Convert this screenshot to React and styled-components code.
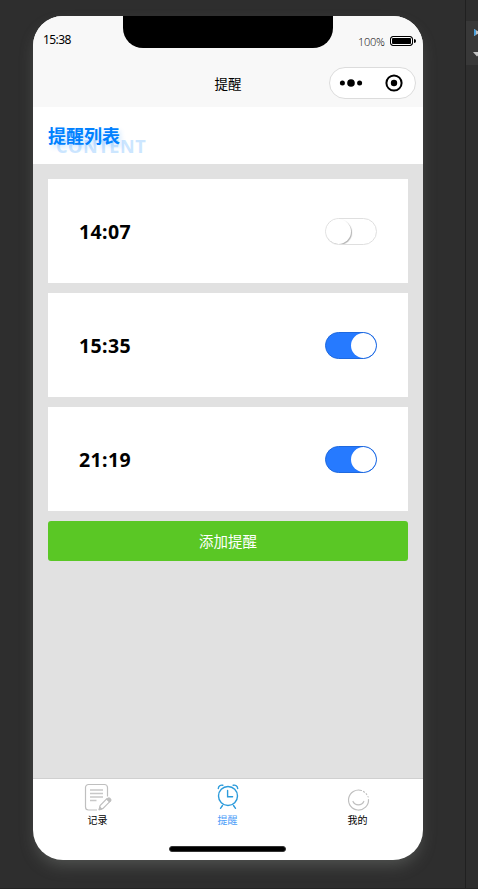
import React, { useState } from "react";
import styled, { createGlobalStyle } from "styled-components";

const App = () => {
  const [reminders, setReminders] = useState([
    { time: "14:07", on: false },
    { time: "15:35", on: true },
    { time: "21:19", on: true },
  ]);

  const toggleReminder = (position) => {
    setReminders(
      reminders.map((item, index) =>
        index === position ? { ...item, on: !item.on } : item
      )
    );
  };

  return (
    <Desk>
      <GlobalStyle />
      <Phone>
        <StatusBar>
          <Clock>15:38</Clock>
          <Notch />
          <BatteryGroup>
            <span>100%</span>
            <Battery />
          </BatteryGroup>
        </StatusBar>
        <NavBar>
          <NavTitle>提醒</NavTitle>
          <Capsule>
            <MenuIcon />
            <CloseIcon />
          </Capsule>
        </NavBar>
        <TitleBar>
          <Title>提醒列表</Title>
          <TitleShade>CONTENT</TitleShade>
        </TitleBar>
        <Content>
          {reminders.map((item, index) => (
            <Card key={item.time}>
              <Time>{item.time}</Time>
              <Switch
                $on={item.on}
                role="switch"
                aria-checked={item.on}
                onClick={() => toggleReminder(index)}
              >
                <Knob $on={item.on} />
              </Switch>
            </Card>
          ))}
          <AddButton>添加提醒</AddButton>
        </Content>
        <TabBar>
          <Tab>
            <NoteIcon />
            <span>记录</span>
          </Tab>
          <Tab $active>
            <AlarmIcon />
            <span>提醒</span>
          </Tab>
          <Tab>
            <SmileIcon />
            <span>我的</span>
          </Tab>
        </TabBar>
        <HomeArea>
          <HomeIndicator />
        </HomeArea>
      </Phone>
      <SidePanel>
        <TreeRows>
          <svg width="12" height="44" viewBox="0 0 12 44">
            <path d="M8 8l6 3.5-6 3.5z" fill="#c4c4c4" />
            <path d="M8 8l2 1.200v4.600l-2 1.200z" fill="#4aa0dc" />
            <path d="M7 31h8l-4 4.500z" fill="#c4c4c4" />
          </svg>
        </TreeRows>
      </SidePanel>
    </Desk>
  );
};

const MenuIcon = () => (
  <svg width="24" height="10" viewBox="0 0 24 10">
    <circle cx="3.4" cy="5" r="2.5" />
    <circle cx="12" cy="5" r="3.8" />
    <circle cx="20.6" cy="5" r="2.5" />
  </svg>
);

const CloseIcon = () => (
  <svg width="18" height="18" viewBox="0 0 18 18">
    <circle cx="9" cy="9" r="7.6" fill="none" stroke="#000" strokeWidth="2" />
    <circle cx="9" cy="9" r="3.2" />
  </svg>
);

const NoteIcon = () => (
  <svg width="30" height="30" viewBox="0 0 30 30" fill="none" stroke="#bfbfbf">
    <path
      d="M24.500 13.500V4.500a3 3 0 0 0-3-3h-16a3 3 0 0 0-3 3v19.500a3 3 0 0 0 3 3h8.500"
      strokeWidth="1.200"
    />
    <path
      d="M7 7h13M7 10.500h13M7 14h13M7 17.500h6.500"
      stroke="#c8c8c8"
      strokeWidth="1.400"
    />
    <path
      d="M16.200 26.500l.9-4 6.600-6.600 2.900 2.900-6.600 6.600z"
      fill="#fff"
      strokeWidth="1.200"
    />
    <path
      d="M23.200 16.200l1.400-1.400a1.800 1.800 0 0 1 2.500 0l.9.900a1.800 1.800 0 0 1 0 2.500l-1.400 1.400z"
      fill="#bfbfbf"
      stroke="none"
    />
    <path d="M16 27l.9-3.200 2.300 2.300z" fill="#bfbfbf" />
  </svg>
);

const AlarmIcon = () => (
  <svg
    width="30"
    height="30"
    viewBox="0 0 30 30"
    fill="none"
    stroke="#2c9bdb"
    strokeWidth="1.400"
    strokeLinecap="round"
  >
    <circle cx="15" cy="13" r="9.500" />
    <path d="M14.600 7.500v6.300h5" />
    <path d="M5.300 5.500c.2-2.400 2.200-3.800 4.500-3.200M24.700 5.500c-.2-2.400-2.200-3.800-4.500-3.200" />
    <path d="M9.500 22.500l-2 2.800M20.500 22.500l2 2.800" />
  </svg>
);

const SmileIcon = () => (
  <svg
    width="30"
    height="30"
    viewBox="0 0 30 30"
    fill="none"
    stroke="#bfbfbf"
    strokeWidth="1.200"
    strokeLinecap="round"
  >
    <path d="M18.500 7.500A10 10 0 1 0 25.500 16.500" />
    <path d="M20.500 8.500l1 .7M23.200 10.700l.5.800M25 13.500l.1.500" />
    <path d="M10 18.500a6 6 0 0 0 10.800 0" />
  </svg>
);

export default App;

const GlobalStyle = createGlobalStyle`
  * {
    box-sizing: border-box;
  }

  body {
    margin: 0;
    overflow: hidden;
    background: #2e2e2e;
    font-family: "Open Sans", "Noto Sans CJK SC", sans-serif;
  }

  svg {
    display: block;
    flex: none;
  }
`;

const Desk = styled.div`
  display: flex;
  gap: 42px;
  height: 889px;
  padding-left: 33px;
  border-bottom: 1px solid #242424;
  overflow: hidden;
`;

const Phone = styled.div`
  display: flex;
  flex: none;
  flex-direction: column;
  width: 390px;
  height: 844px;
  margin-top: 16px;
  border-radius: 30px;
  overflow: hidden;
  background: #fff;
  color: #000;
  box-shadow: 0 8px 16px -3px rgba(150, 155, 150, 0.35);
`;

const StatusBar = styled.div`
  display: grid;
  grid-template-columns: 90px 210px 90px;
  height: 50px;
  background: #f8f8f8;
`;

const Clock = styled.span`
  padding: 16px 0 0 10px;
  font-family: "Noto Sans", sans-serif;
  font-size: 12px;
  line-height: 16px;
  letter-spacing: -0.6px;
`;

const Notch = styled.div`
  height: 32px;
  border-radius: 0 0 20px 20px;
  background: #000;
`;

const BatteryGroup = styled.div`
  display: flex;
  align-items: center;
  justify-content: space-between;
  height: 16px;
  margin: 17px 7px 0 25px;
  font-size: 11px;
  font-weight: 300;
  letter-spacing: -0.3px;
`;

const Battery = styled.div`
  position: relative;
  width: 23px;
  height: 10px;
  margin-right: 3px;
  border: 1px solid #000;
  border-radius: 3px;
  background: #000;
  box-shadow: inset 0 0 0 1px #fff;

  &::after {
    content: "";
    position: absolute;
    top: 2px;
    right: -4px;
    width: 2px;
    height: 4px;
    border-radius: 0 2px 2px 0;
    background: #000;
  }
`;

const NavBar = styled.div`
  display: grid;
  grid-template-columns: 1fr auto 1fr;
  align-items: center;
  height: 41px;
  padding: 0 7px 8px;
  background: #f8f8f8;
`;

const NavTitle = styled.div`
  grid-column: 2;
  padding-top: 3px;
  font-size: 13.500px;
  line-height: 20px;
`;

const Capsule = styled.div`
  display: flex;
  align-items: center;
  justify-self: end;
  justify-content: space-between;
  width: 87px;
  height: 32px;
  padding: 0 12px 0 9px;
  border: 1px solid #dcdcdc;
  border-radius: 16px;
  background: #fff;
`;

const TitleBar = styled.div`
  position: relative;
  height: 57px;
  padding: 16px 15px;
`;

const Title = styled.div`
  position: relative;
  z-index: 1;
  color: #0081ff;
  font-size: 18px;
  font-weight: 700;
  line-height: 26px;
  text-shadow: 3px 3px 4px rgba(0, 129, 255, 0.2);
`;

const TitleShade = styled.div`
  position: absolute;
  left: 23px;
  top: 26px;
  color: #cce6ff;
  font-size: 18px;
  font-weight: 700;
  line-height: 26px;
  letter-spacing: 0.600px;
`;

const Content = styled.div`
  display: flex;
  flex: 1;
  flex-direction: column;
  gap: 10px;
  padding: 15px;
  background: #e1e1e1;
`;

const Card = styled.div`
  display: flex;
  align-items: center;
  justify-content: space-between;
  height: 104px;
  padding: 0 31px;
  background: #fff;
`;

const Time = styled.span`
  padding-top: 1px;
  font-family: "Noto Sans", sans-serif;
  font-size: 19.500px;
  font-weight: 700;
  letter-spacing: 0.400px;
`;

const Switch = styled.button`
  display: flex;
  justify-content: ${({ $on }) => ($on ? "flex-end" : "flex-start")};
  width: 52px;
  height: 27px;
  padding: 0;
  border: 1px solid ${({ $on }) => ($on ? "#1f69de" : "#dfdfdf")};
  border-radius: 14px;
  background: ${({ $on }) => ($on ? "#267aff" : "#fff")};
  overflow: hidden;
  cursor: pointer;
`;

const Knob = styled.span`
  width: 25px;
  height: 25px;
  border-radius: 50%;
  background: #fff;
  box-shadow: ${({ $on }) => ($on ? "none" : "1px 1px 1px rgba(0, 0, 0, 0.3)")};
`;

const AddButton = styled.button`
  height: 40px;
  padding: 0 0 2px;
  border: 0;
  border-radius: 3px;
  background: #5ac725;
  color: #fff;
  font-family: inherit;
  font-size: 14.500px;
  cursor: pointer;
`;

const TabBar = styled.div`
  display: grid;
  grid-template-columns: repeat(3, 1fr);
  height: 51px;
  border-top: 1px solid #d0d0d0;
`;

const Tab = styled.div`
  display: flex;
  flex-direction: column;
  align-items: center;
  padding: 4px 1px 0 0;
  color: ${({ $active }) => ($active ? "#4b9df8" : "#000")};
  font-size: 10px;
  line-height: 15px;
`;

const HomeArea = styled.div`
  display: flex;
  justify-content: center;
  height: 31px;
  padding: 17px 2px 0 0;
`;

const HomeIndicator = styled.div`
  width: 117px;
  height: 6px;
  border: 1px solid #333;
  border-radius: 3px;
  background: #000;
`;

const SidePanel = styled.div`
  flex: 1;
  padding-top: 21px;
  border-left: 1px solid #202020;
  background: #2e2e2e;
`;

const TreeRows = styled.div`
  height: 44px;
  overflow: hidden;
  background: #383838;
`;
